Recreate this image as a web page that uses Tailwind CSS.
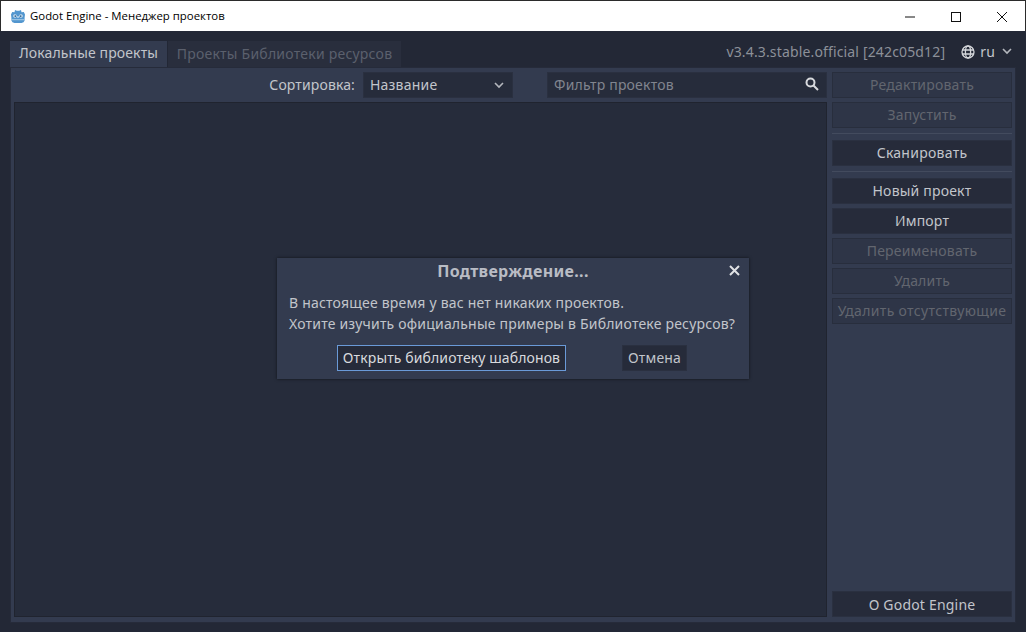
<!DOCTYPE html>
<html lang="ru">
<head>
    <meta charset="UTF-8">
    <title>Godot Engine - Менеджер проектов</title>
    <script src="https://cdn.jsdelivr.net/npm/@tailwindcss/browser@4"></script>
</head>
<body class="w-[1026px] h-[632px] overflow-hidden bg-[#232836] font-['Noto_Sans',sans-serif] text-[14px] tracking-[0.2px] text-[#c2c5cb]">

    <!-- Title bar -->
    <div class="h-[31px] border-t border-x border-[#2b2b2b] bg-white flex items-center text-black">
        <svg class="ml-[9px] w-[16px] h-[16px]" viewBox="0 0 16 16">
            <path fill="#5296cf" d="M1 6.5 L2.2 4 L4.5 4.2 L5 2 L6.8 2.8 H9.2 L11 2 L11.5 4.2 L13.8 4 L15 6.5 L14.6 9.5 V12.5 Q14 14.8 11.5 15 H4.5 Q2 14.8 1.4 12.5 V9.5 Z"/>
            <circle cx="5" cy="8" r="1.8" fill="#d6e6f3"/>
            <circle cx="11" cy="8" r="1.8" fill="#d6e6f3"/>
            <circle cx="5.3" cy="8.1" r="0.9" fill="#2f5f8a"/>
            <circle cx="10.7" cy="8.1" r="0.9" fill="#2f5f8a"/>
            <rect x="7.4" y="8" width="1.2" height="2" fill="#d6e6f3"/>
            <path d="M1.5 11.2 H14.5 V12.2 H1.5 Z" fill="#a9cbe6"/>
        </svg>
        <span class="ml-[4px] font-['Open_Sans',sans-serif] text-[11.4px] tracking-normal">Godot Engine - Менеджер проектов</span>
        <div class="ml-auto flex items-center">
            <svg class="w-[46px] h-[29px]" viewBox="0 0 46 29"><path d="M18 15 H28" stroke="#111" fill="none"/></svg>
            <svg class="w-[46px] h-[29px]" viewBox="0 0 46 29"><rect x="18.5" y="10.5" width="9" height="9" stroke="#111" fill="none"/></svg>
            <svg class="w-[46px] h-[29px]" viewBox="0 0 46 29"><path d="M18 10 L28 20 M28 10 L18 20" stroke="#111" fill="none"/></svg>
        </div>
    </div>

    <!-- Tabs row -->
    <div class="h-[36px] pt-[9px] pl-[10px] pr-[10px] flex items-end">
        <div class="h-[27px] w-[158px] pb-[3px] flex items-center justify-center bg-[#333b4f] border-t border-r border-[#222735] tracking-[0.12px]">Локальные проекты</div>
        <div class="h-[26px] w-[233px] pb-[2px] flex items-center justify-center bg-[#292e3d] text-[#5b606d] tracking-[0.23px]">Проекты Библиотеки ресурсов</div>
        <div class="ml-auto h-[27px] flex items-center pb-[4px]">
            <span class="text-[#8c9099] tracking-[0.15px]">v3.4.3.stable.official [242c05d12]</span>
            <svg class="ml-[16px] w-[14px] h-[14px]" viewBox="0 0 14 14" fill="none" stroke="#d4d6da" stroke-width="1.3">
                <circle cx="7" cy="7" r="6"/>
                <ellipse cx="7" cy="7" rx="2.6" ry="6"/>
                <path d="M1 5 H13 M1 9 H13"/>
            </svg>
            <span class="ml-[5px]">ru</span>
            <svg class="ml-[7px] mr-[4px] w-[10px] h-[7px]" viewBox="0 0 10 7" fill="none" stroke="#b4b7bd" stroke-width="1.6"><path d="M1 1 L5 5 L9 1"/></svg>
        </div>
    </div>

    <!-- Main panel -->
    <div class="mx-[10px] h-[556px] bg-[#333b4f] border border-[#262b3a] pt-[4px] pl-[3px] pr-[3px] pb-[5px] flex gap-[5px]">
        <!-- Left column -->
        <div class="w-[813px] flex flex-col gap-[4px]">
            <div class="h-[26px] flex items-center">
                <span class="ml-auto pb-[2px] tracking-[0.13px]">Сортировка:</span>
                <div class="ml-[8px] w-[150px] h-[26px] pb-[2px] bg-[#262c3b] border border-[#2a3040] flex items-center px-[6px]">
                    <span>Название</span>
                    <svg class="ml-auto mr-[2px] mt-[2px] w-[10px] h-[7px]" viewBox="0 0 10 7" fill="none" stroke="#b4b7bd" stroke-width="1.6"><path d="M1 1 L5 5 L9 1"/></svg>
                </div>
                <div class="ml-[34px] w-[280px] h-[26px] pb-[2px] bg-[#262c3b] border border-[#2a3040] flex items-center px-[6px]">
                    <span class="text-[#81858f]">Фильтр проектов</span>
                    <svg class="ml-auto mr-[1px] w-[14px] h-[14px]" viewBox="0 0 14 14" fill="none" stroke="#d8dade" stroke-width="2"><circle cx="5.5" cy="5.5" r="4"/><path d="M8.5 8.5 L13 13"/></svg>
                </div>
            </div>
            <div class="flex-1 bg-[#262c3b] border border-[#20242f]"></div>
        </div>

        <!-- Right column -->
        <div class="w-[180px] flex flex-col">
            <div class="h-[26px] pb-[2px] mb-[4px] flex items-center justify-center bg-[#2e3547] border border-[#282e3d] text-[#62666f]">Редактировать</div>
            <div class="h-[26px] pb-[2px] flex items-center justify-center bg-[#2e3547] border border-[#282e3d] text-[#62666f]">Запустить</div>
            <div class="h-px mt-[5px] mb-[6px] bg-[#434b5e]"></div>
            <div class="h-[26px] pb-[2px] flex items-center justify-center bg-[#262b3a] border border-[#2a3040] tracking-[0.27px]">Сканировать</div>
            <div class="h-px mt-[5px] mb-[6px] bg-[#434b5e]"></div>
            <div class="h-[26px] pb-[2px] mb-[4px] flex items-center justify-center bg-[#262b3a] border border-[#2a3040]">Новый проект</div>
            <div class="h-[26px] pb-[2px] mb-[4px] flex items-center justify-center bg-[#262b3a] border border-[#2a3040]">Импорт</div>
            <div class="h-[26px] pb-[2px] mb-[4px] flex items-center justify-center bg-[#2e3547] border border-[#282e3d] text-[#62666f]">Переименовать</div>
            <div class="h-[26px] pb-[2px] mb-[4px] flex items-center justify-center bg-[#2e3547] border border-[#282e3d] text-[#62666f]">Удалить</div>
            <div class="h-[26px] pb-[2px] flex items-center justify-center bg-[#2e3547] border border-[#282e3d] text-[#62666f] whitespace-nowrap tracking-[0.33px]">Удалить отсутствующие</div>
            <div class="mt-auto h-[26px] flex items-center justify-center bg-[#262b3a] border border-[#2a3040]">О Godot Engine</div>
        </div>
    </div>

    <!-- Confirm dialog -->
    <div class="absolute left-[277px] top-[258px] w-[472px] h-[121px] bg-[#333b4f] shadow-[0_0_3px_rgba(0,0,0,0.6)] px-[12px]">
        <div class="h-[27px] pb-[2px] flex items-center justify-center font-bold text-[16px] tracking-[0.33px] text-[#b9bcc4]">Подтверждение...</div>
        <svg class="absolute right-[9px] top-[7px] w-[11px] h-[11px]" viewBox="0 0 11 11" fill="none" stroke="#e0e2e5" stroke-width="2"><path d="M1 1 L10 10 M10 1 L1 10"/></svg>
        <div class="mt-[7px] leading-[21px] whitespace-nowrap">В настоящее время у вас нет никаких проектов.<br>Хотите изучить официальные примеры в Библиотеке ресурсов?</div>
        <div class="mt-[11px] ml-[48px] flex">
            <div class="w-[229px] h-[26px] pb-[2px] flex items-center justify-center bg-[#262b3a] border border-[#6a9ad8] text-[#d8dade] tracking-[0.11px]">Открыть библиотеку шаблонов</div>
            <div class="ml-[56px] w-[65px] h-[26px] pb-[2px] flex items-center justify-center bg-[#262b3a] border border-[#2a3040]">Отмена</div>
        </div>
    </div>
</body>
</html>
